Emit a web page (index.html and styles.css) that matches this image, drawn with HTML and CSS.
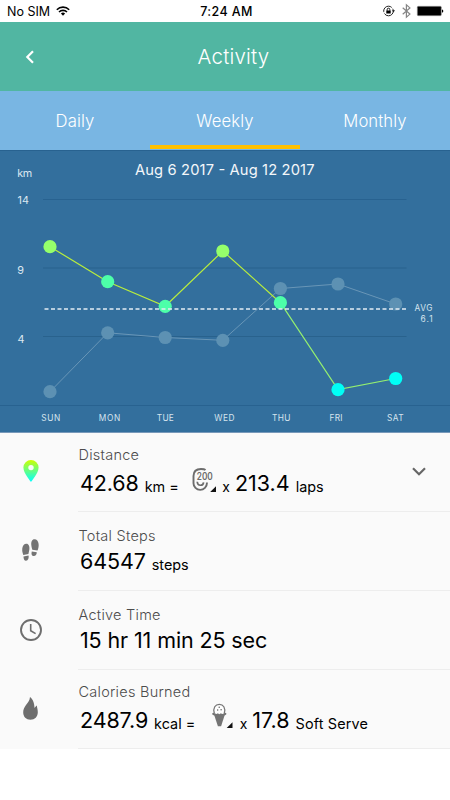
FILE: index.html
```html
<!DOCTYPE html>
<html lang="en">
<head>
<meta charset="utf-8">
<title>Activity</title>
<link rel="stylesheet" href="styles.css">
</head>
<body>
<div class="status">
  <div class="carrier"><span>No SIM</span>
    <svg width="14" height="10" viewBox="0 0 14 10" fill="none" stroke="#000" stroke-width="1.6"><path d="M.8 3.7a8.8 8.8 0 0 1 12.4 0M3 6a5.700 5.700 0 0 1 8 0"/><path d="M4.900 7.600a3 3 0 0 1 4.200 0L7 9.800z" fill="#000" stroke="none"/></svg>
  </div>
  <div class="clock">7:24 AM</div>
  <div class="indicators">
    <svg width="12" height="12" viewBox="0 0 12 12"><circle cx="5.500" cy="6" r="4.800" fill="none" stroke="#222" stroke-width="1" stroke-dasharray="12 1.500"/><path d="M9 5.300h3L10.500 7.500z" fill="#222"/><path d="M3.300 5.500h4.400v3H3.300z"/><path d="M4.200 5.700V4.500a1.300 1.300 0 0 1 2.600 0v1.200" fill="none" stroke="#000" stroke-width=".9"/></svg>
    <svg class="bluetooth" width="9" height="14" viewBox="0 0 9 14" fill="none" stroke="#858585" stroke-width="1.200"><path d="M.7 3.800l7.200 6.300-3.500 3V.9l3.500 3L.7 10.200"/></svg>
    <svg width="27" height="10" viewBox="0 0 27 10"><rect x=".3" y=".3" width="24" height="9.400" rx="1" fill="#000" stroke="#999" stroke-width=".6"/><path d="M25 3.400c1.700.2 1.700 3 0 3.200z"/></svg>
  </div>
</div>
<header class="header">
  <svg class="back" width="10" height="14" viewBox="0 0 10 14" fill="none" stroke="#fff" stroke-width="2.200"><path d="M8 1.200L2.300 7 8 12.800"/></svg>
  <h1>Activity</h1>
</header>
<nav class="tabs">
  <a>Daily</a><a class="active">Weekly</a><a>Monthly</a>
</nav>
<svg class="chart" width="450" height="283" viewBox="0 150 450 283">
  <rect y="150" width="450" height="283" fill="#336f9d"/>
  <path d="M0 150.500H450M43 199.500H406.500M0 405.500H450" stroke="#286290"/>
  <path d="M43 268H406.500M43 336.500H406.500" stroke="#29628d"/>
  <path d="M0 432.500H450" stroke="#7899ba"/>
  <text x="135" y="175" font-size="14.700" textLength="179.500" class="bright">Aug 6 2017 - Aug 12 2017</text>
  <g class="scale"><text x="17.200" y="177" textLength="15">km</text><text x="17.500" y="204" textLength="11.500">14</text><text x="17.300" y="273.500">9</text><text x="17.500" y="343.200">4</text></g>
  <path d="M50 391.700L107.700 332.800 165.200 337.500 222.800 340.300 280.400 288.500 338 284 395.700 304" fill="none" stroke="#6996b7" stroke-width="1"/>
  <g fill="#5d91b3"><circle cx="50" cy="391.700" r="6.600"/><circle cx="107.700" cy="332.800" r="6.600"/><circle cx="165.200" cy="337.500" r="6.600"/><circle cx="222.800" cy="340.300" r="6.600"/><circle cx="280.400" cy="288.500" r="6.600"/><circle cx="338" cy="284" r="6.600"/><circle cx="395.700" cy="304" r="6.600"/></g>
  <path d="M50 246.700L107.700 281.700 165.200 306.300 222.800 251 280.400 302.700" fill="none" stroke="#b9ee3d" stroke-width="1.200"/>
  <path d="M280.400 302.700L338 389.700 395.700 378.500" fill="none" stroke="#94ef70" stroke-width="1.200"/>
  <g fill="#95ff6b"><circle cx="50" cy="246.700" r="6.600"/><circle cx="222.800" cy="251" r="6.600"/></g>
  <g fill="#4dffa9"><circle cx="107.700" cy="281.700" r="6.600"/><circle cx="165.200" cy="306.300" r="6.600"/><circle cx="280.400" cy="302.700" r="6.600"/></g>
  <g fill="#00fff6"><circle cx="338" cy="389.700" r="6.600"/><circle cx="395.700" cy="378.500" r="6.600"/></g>
  <path d="M44.500 308.900H407" stroke="#e4edf3" stroke-width="1.500" stroke-dasharray="4 2.500"/>
  <g class="small"><text x="414.500" y="311.300" textLength="18">AVG</text><text x="420.500" y="321.800" textLength="12">6.1</text></g>
  <g class="small"><text x="41.300" y="420.500" textLength="19">SUN</text><text x="98.800" y="420.500" textLength="21.500">MON</text><text x="156.800" y="420.500" textLength="17">TUE</text><text x="214.200" y="420.500" textLength="20.300">WED</text><text x="272" y="420.500" textLength="18.500">THU</text><text x="329.500" y="420.500" textLength="13">FRI</text><text x="387" y="420.500" textLength="16.500">SAT</text></g>
</svg>
<main>
  <section class="row distance">
    <div class="icon"><svg width="16" height="22" viewBox="0 0 16 22"><defs><linearGradient id="pin" x2="0" y2="1"><stop offset="0" stop-color="#cfff00"/><stop offset=".5" stop-color="#62ff87"/><stop offset="1" stop-color="#00ffff"/></linearGradient></defs><path fill="url(#pin)" fill-rule="evenodd" d="M8 0a7.600 7.600 0 0 0-7.600 7.600C.4 13.300 8 22 8 22s7.600-8.700 7.600-14.400A7.600 7.600 0 0 0 8 0zm0 4.900a2.700 2.700 0 1 1 0 5.400 2.700 2.700 0 0 1 0-5.400z"/></svg></div>
    <div class="body"><div class="label">Distance</div>
      <div class="value"><b>42.68</b><span class="unit">km =</span>
        <svg class="lap" width="24" height="25" viewBox="0 0 24 25" fill="none" stroke="#6c6c6c"><path d="M13.500 2C12.500 1.100 11 1 9 1 4.500 1 1.500 3.500 1.500 8v7.200a6.700 6.700 0 0 0 13.400 0v-.7" stroke-width="1.900"/><path d="M5.200 13.700c.4 4.600 6 4.600 6.400.6" stroke-width="1.700"/><text class="lap-text" x="4.800" y="12" textLength="16" lengthAdjust="spacingAndGlyphs">200</text><path d="M24 18.200V24h-5.800z" fill="#111" stroke="none"/></svg>
        <span class="times">x</span><b class="factor">213.4</b><span class="unit">laps</span></div></div>
    <svg class="expand" width="14" height="9" viewBox="0 0 14 9" fill="none" stroke="#666" stroke-width="2.200"><path d="M1 1.200l6 6 6-6"/></svg>
  </section>
  <section class="row steps">
    <div class="icon"><svg width="17" height="23" viewBox="0 0 17 23" fill="#747474"><path d="M4.400 4.700c2.300 0 3.300 2.600 3 5.400-.2 2-.6 3.200-1 5L1.300 16C.5 13.800 0 12 .3 9.300.7 6.700 2.100 4.700 4.400 4.700zM1.500 17.400l5-.9c.6 2.300-.3 5-2.500 5.200-1.600.1-2.600-2-2.500-4.300zM12.500.3C10 .3 9 2.900 9.300 6c.2 2 .6 3.200 1 4.700l5.200.9c.8-2 1.400-4.300 1.100-6.700C16.200 2.300 14.800.3 12.500.3zM9.800 12.400l5 .9c0 2.200-1.400 4-3.200 3.800-1.800-.2-2.600-2.400-1.800-4.700z"/></svg></div>
    <div class="body"><div class="label">Total Steps</div><div class="value"><b>64547</b><span class="unit">steps</span></div></div>
  </section>
  <section class="row time">
    <div class="icon"><svg width="22" height="22" viewBox="0 0 22 22" fill="none" stroke="#6e6e6e"><circle cx="11" cy="11" r="10" stroke-width="1.900"/><path d="M10.700 5v6.700l4.900 2.900" stroke-width="1.600"/></svg></div>
    <div class="body"><div class="label">Active Time</div><div class="value"><b>15 hr 11 min 25 sec</b></div></div>
  </section>
  <section class="row calories">
    <div class="icon"><svg width="15" height="23" viewBox="0 0 15 23" fill="#6e6e6e"><path d="M7 0c-.2 3.600-2.300 5.500-4 8C1.300 10.300.2 12.400.2 15.200c0 4.600 3 7.500 7.300 7.500s7.300-3 7.300-7.500c0-2.600-.7-4.400-1-6.800-1 .6-1.500 1.700-2.300 2.500C11.400 7.400 10.400 2.300 7 0z"/></svg></div>
    <div class="body"><div class="label">Calories Burned</div>
      <div class="value"><b>2487.9</b><span class="unit">kcal =</span>
        <svg class="cone" width="21" height="25" viewBox="0 0 21 25"><path d="M2.300 9.200C.8 3.800 3.300.4 7.300.4s6.500 3.400 5 8.800" fill="#fff" stroke="#777" stroke-width="1.300"/><path d="M.3 9.300c.8-1 1.800-.7 2.500 0 1.400 1 2.200.8 3 0 1 1.100 2.100 1.100 3.100 0 .9.800 2 .9 3 0 .7-.7 1.800-.9 2.400 0 .5 1.600-1.200 2.200-2.500 2.100H2.900C1.300 11.400-.1 10.900.3 9.300z" fill="#747474"/><path d="M2.200 11h10.500L9.100 22.300H5.900z" fill="#747474"/><g fill="#555"><circle cx="7.200" cy="3.300" r=".7"/><circle cx="5.700" cy="6" r=".7"/><circle cx="9.100" cy="5.700" r=".7"/></g><path d="M20.500 18.200V24h-5.800z" fill="#111"/></svg>
        <span class="times">x</span><b class="factor">17.8</b><span class="unit serve">Soft Serve</span></div></div>
  </section>
</main>
</body>
</html>
```

FILE: styles.css
```css
* { box-sizing: border-box; }
body { margin: 0; width: 450px; height: 800px; overflow: hidden; background: #fff; font-family: Inter, "Liberation Sans", sans-serif; color: #000; }
svg { display: block; flex: none; overflow: visible; }
.status { height: 22px; display: grid; grid-template-columns: 1fr auto 1fr; align-items: center; padding: 0 6px 0 7px; font-size: 12.5px; }
.carrier { display: flex; align-items: center; gap: 6px; }
.clock { font-weight: 500; font-size: 12.5px; letter-spacing: .4px; margin-left: 2px; }
.indicators { display: flex; align-items: center; justify-content: flex-end; gap: 6px; }
.indicators svg:first-child { margin-right: 1px; }
.header { height: 69px; background: #51b6a2; color: #fff; display: grid; grid-template-columns: 1fr auto 1fr; align-items: center; padding: 0 8px 0 25px; }
.header h1 { margin: 0; font-size: 20.5px; font-weight: 350; letter-spacing: .2px; }
.tabs { height: 59px; padding-bottom: 1px; background: #79b6e3; display: grid; grid-template-columns: repeat(3, 150px); color: #fff; }
.tabs a { display: flex; justify-content: center; align-items: center; font-size: 16.7px; font-weight: 350; letter-spacing: .1px; border-top: 6px solid transparent; border-bottom: 4px solid transparent; }
.tabs .active { border-bottom-color: #ffc000; }
.chart { font-family: Inter, "Liberation Sans", sans-serif; }
.bright { fill: #f3f7fa; }
.scale { fill: #dce8f1; font-size: 10.8px; }
.small { fill: #d6e4ee; font-size: 8.3px; }
main { background: #fafafa; height: 316px; }
.row { height: 79px; display: grid; grid-template-columns: 78px 1fr auto; }
.icon { display: flex; justify-content: center; align-items: center; padding: 0 17px 2px 0; grid-area: 1 / 1; }
.distance .icon, .calories .icon { padding-bottom: 3px; }
.body { border-bottom: 1px solid #ededed; grid-area: 1 / 2 / 2 / 4; }
.expand { grid-area: 1 / 3; align-self: center; margin: 0 24px 3px 0; }
.label { font-size: 14.5px; font-weight: 350; line-height: 20px; color: #4c4c4c; margin-top: 12px; margin-left: .5px; letter-spacing: .25px; }
.steps .label, .time .label { margin-top: 14px; }
.value { display: flex; align-items: baseline; height: 28px; line-height: 28px; padding-left: 2px; white-space: nowrap; }
.value b { font-weight: 400; font-size: 21.5px; letter-spacing: -.12px; }
.distance .value, .calories .value { margin-top: 4px; }
.steps .value, .time .value { margin-top: 1px; }
.unit { font-size: 14.4px; margin-left: 6px; position: relative; top: 1px; }
.times { font-size: 14px; margin-left: 6.5px; position: relative; top: 1px; }
.value .factor { margin-left: 5px; letter-spacing: 0; }
.factor + .unit { margin-left: 6px; }
.serve { letter-spacing: .15px; }
.lap, .cone { align-self: flex-start; }
.lap { margin-left: 13px; margin-top: -1px; }
.cone { margin-left: 17px; margin-top: -2px; }
.lap-text { font-size: 10px; font-weight: 600; fill: #6c6c6c; stroke: #fafafa; stroke-width: 1.6px; paint-order: stroke; }
```
